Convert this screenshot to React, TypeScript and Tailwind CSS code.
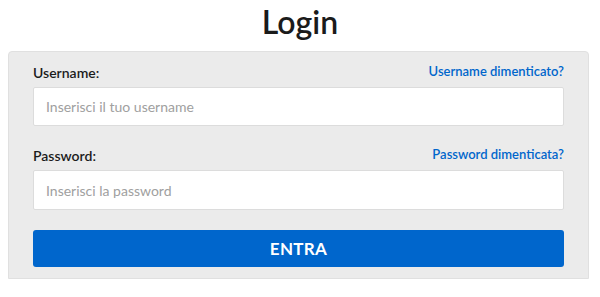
import React, { useState } from "react";

export default function App() {
  const [form, setForm] = useState({ username: "", password: "" });

  const handleChange = (e: React.ChangeEvent<HTMLInputElement>) => {
    const { name, value } = e.target;
    setForm({ ...form, [name]: value });
  };

  return (
    <div
      className="w-[600px] h-[297px] bg-white overflow-hidden"
      style={{ fontFamily: "Lato, 'Open Sans', sans-serif" }}
    >
      {/* TITOLO */}
      <h1 className="pt-[2px] h-[51px] text-center text-[32px] leading-[40px] font-semibold text-[#1b1b1b]">
        Login
      </h1>

      {/* PANNELLO */}
      <div className="mx-2 w-[581px] bg-[#ebebeb] border border-[#e0e0e0] rounded-t-[4px] px-[24px] pt-[10px] pb-[11px]">
        {/* USERNAME */}
        <div className="flex items-center justify-between h-[20px] mb-[5px]">
          <label className="text-[14px] font-semibold text-[#1b1b1b]">
            Username:
          </label>
          <a className="text-[13px] font-semibold text-[#0066cc] cursor-pointer">
            Username dimenticato?
          </a>
        </div>
        <input
          type="text"
          name="username"
          value={form.username}
          onChange={handleChange}
          placeholder="Inserisci il tuo username"
          className="block w-full h-[39px] px-3 bg-white border border-[#dcdcdc] rounded-[2px] text-[14px] text-[#333] placeholder:text-[#a0a0a0] outline-none"
        />

        {/* PASSWORD */}
        <div className="flex items-center justify-between h-[20px] mt-[19px] mb-[5px]">
          <label className="text-[14px] font-semibold text-[#1b1b1b]">
            Password:
          </label>
          <a className="text-[13px] font-semibold text-[#0066cc] cursor-pointer">
            Password dimenticata?
          </a>
        </div>
        <input
          type="password"
          name="password"
          value={form.password}
          onChange={handleChange}
          placeholder="Inserisci la password"
          className="block w-full h-[40px] px-3 bg-white border border-[#dcdcdc] rounded-[2px] text-[14px] text-[#333] placeholder:text-[#a0a0a0] outline-none"
        />

        <button className="mt-[20px] w-full h-[37px] bg-[#0066cc] rounded-[3px] text-white text-[17px] font-bold tracking-[0.3px]">
          ENTRA
        </button>
      </div>
    </div>
  );
}
